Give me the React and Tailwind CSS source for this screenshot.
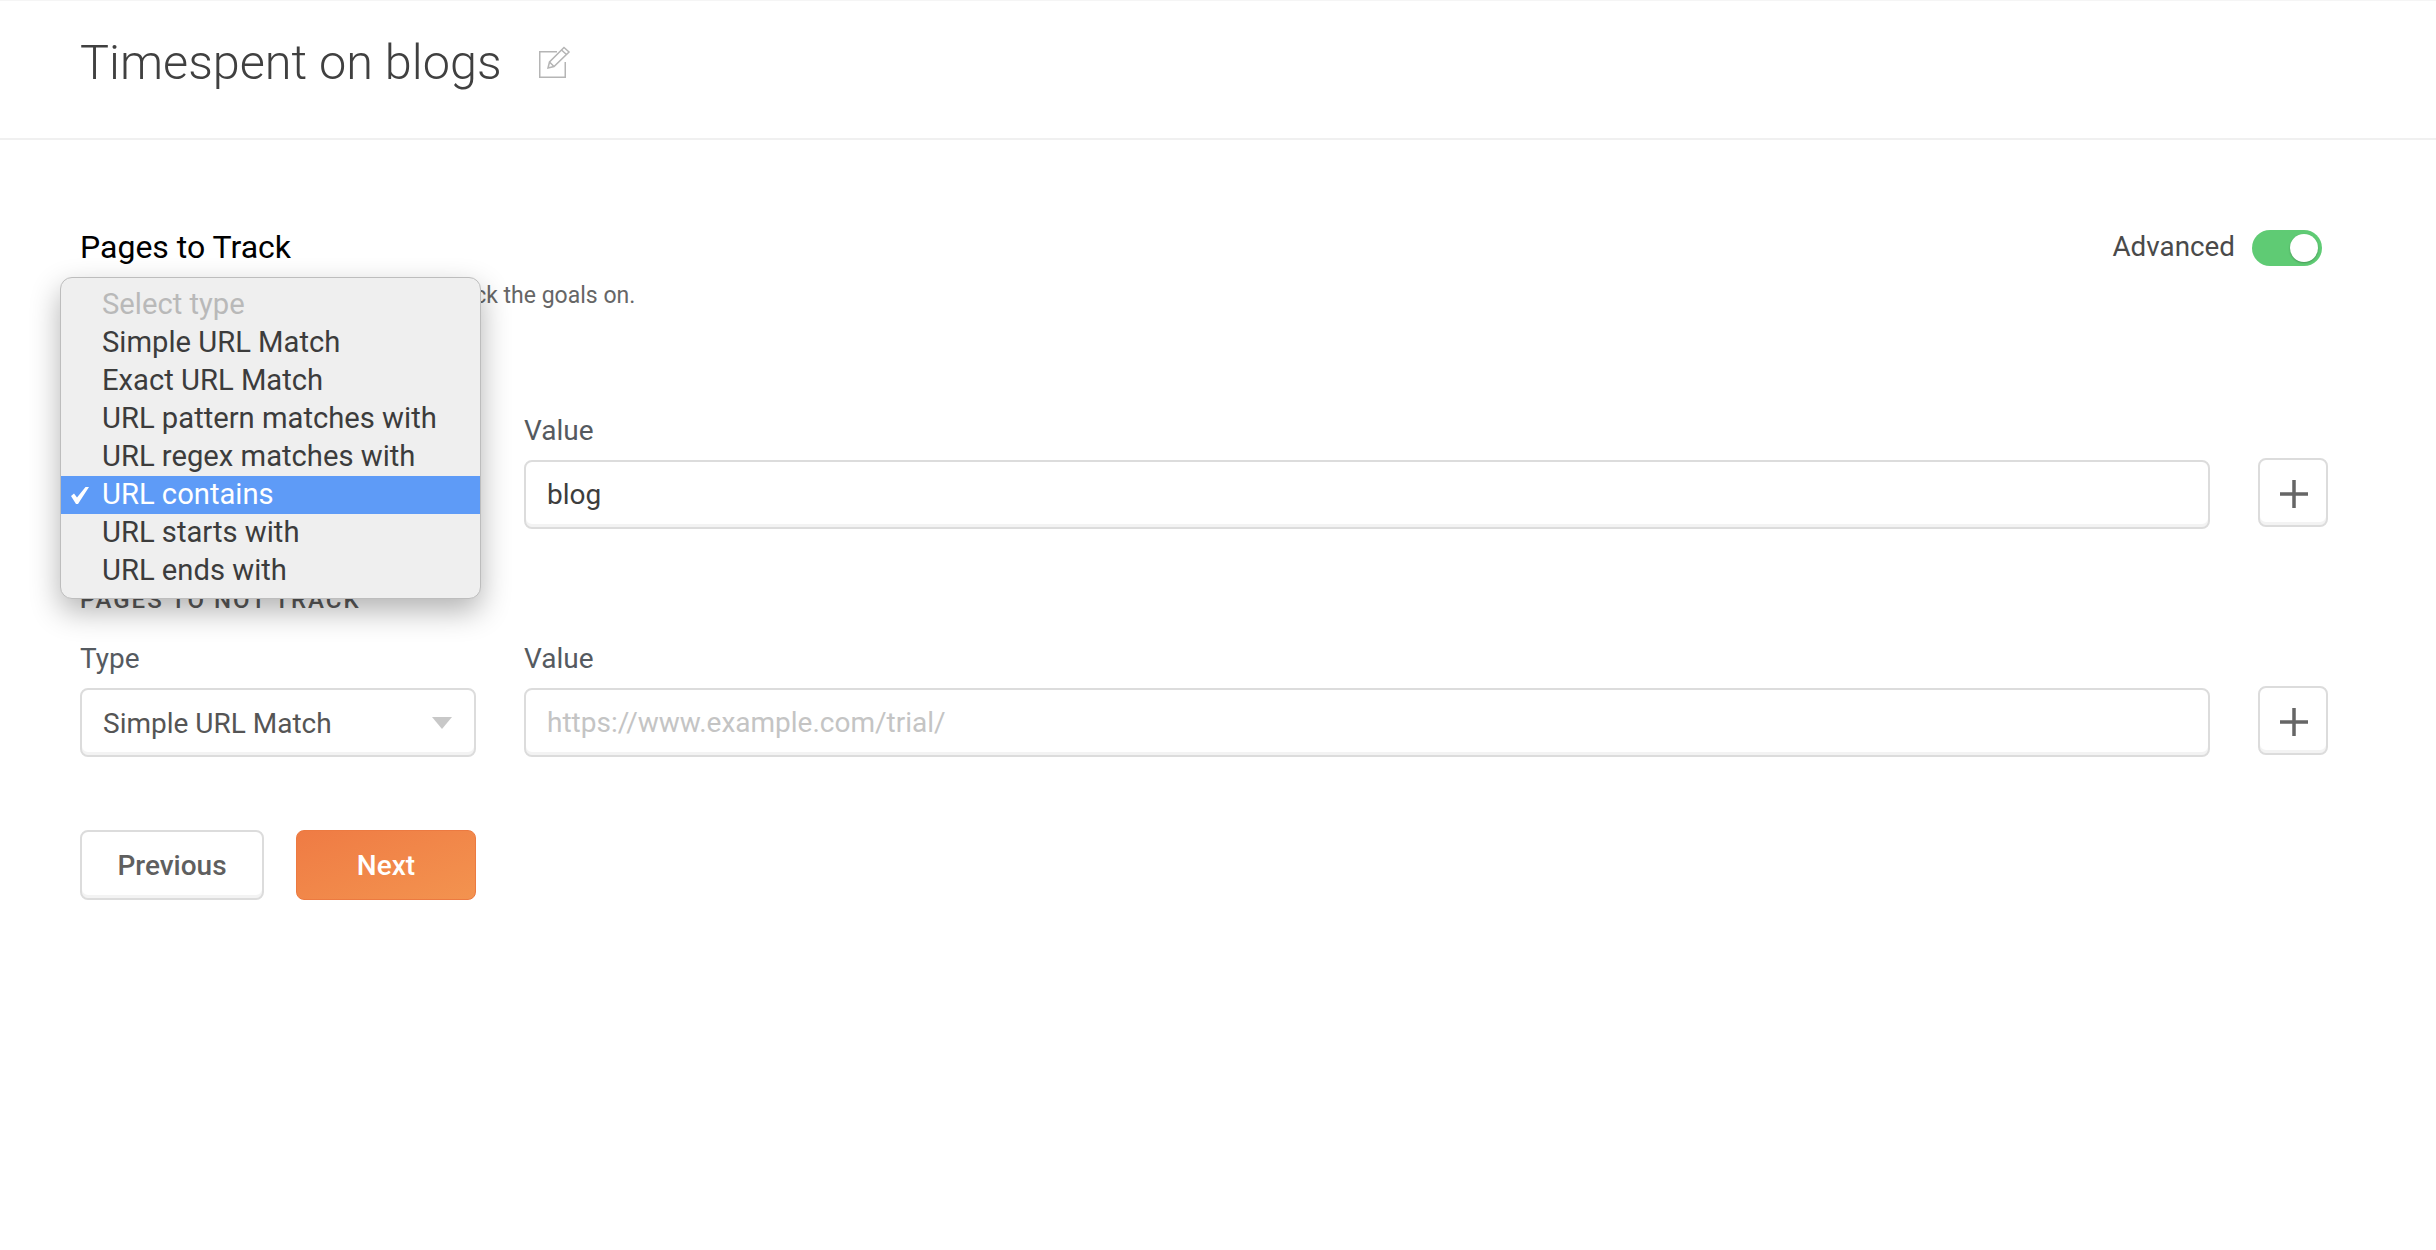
const menuItems = ['Simple URL Match', 'Exact URL Match', 'URL pattern matches with', 'URL regex matches with', 'URL contains', 'URL starts with', 'URL ends with'];

function EditIcon() {
  return (
    <svg width="36" height="36" viewBox="0 0 36 36" fill="none" stroke="#b5b5b5" strokeWidth="1.5" className="ml-[34px]">
      <path d="M21 7.75H3.75v25.5h25.5V18" />
      <path d="M12 24l1.5-6L28 3.5l5 4.5L18 22.5z" />
      <path d="M13.5 18l4.5 4.5M25.5 6l5 4.5" />
    </svg>
  );
}

function PlusButton() {
  return (
    <button className="w-[70px] h-[69px] mb-[2px] shrink-0 flex items-center justify-center rounded-lg border-2 border-[#dcdcdc] bg-white shadow-[inset_0_-3px_0_#f3f3f3]">
      <svg width="28" height="28" viewBox="0 0 28 28" stroke="#666666" strokeWidth="3.5" className="ml-[1px] mt-[2px]">
        <path d="M14 0v28M0 14h28" />
      </svg>
    </button>
  );
}

function FieldRow({ selected, value, placeholder }) {
  return (
    <div className="flex gap-[48px] items-end">
      <div className="w-[396px] shrink-0">
        <div className="text-[28px] leading-[36px] text-[#555a60] mb-[11px]">Type</div>
        <div className="h-[69px] flex items-center justify-between pl-[21px] pr-[22px] rounded-lg border-2 border-[#dcdcdc] bg-white shadow-[inset_0_-3px_0_#f3f3f3] text-[28px] text-[#555555]">
          <span className="pt-[2px]">{selected}</span>
          <span className="w-0 h-0 border-x-[10px] border-x-transparent border-t-[12px] border-t-[#c8c8c8]" />
        </div>
      </div>
      <div className="flex-1">
        <div className="text-[28px] leading-[36px] text-[#555a60] mb-[11px]">Value</div>
        <div className="h-[69px] flex items-center px-[21px] rounded-lg border-2 border-[#dcdcdc] bg-white shadow-[inset_0_-3px_0_#f3f3f3] text-[28px]">
          {value ? <span className="text-[#3d3d3d]">{value}</span> : <span className="text-[#c4c4c4]">{placeholder}</span>}
        </div>
      </div>
      <PlusButton />
    </div>
  );
}

export default function App() {
  return (
    <div className="relative min-h-[1250px] bg-white font-['Roboto',sans-serif]">
      <header className="h-[140px] pl-[80px] pb-[16px] flex items-center border-t border-t-[#f5f5f5] border-b-2 border-b-[#f0f0f0]">
        <h1 className="mt-[4px] text-[48.6px] font-light text-[#404040]">Timespent on blogs</h1>
        <EditIcon />
      </header>

      <main className="pl-[80px] pr-[108px] pt-[84px]">
        <div className="flex justify-between items-center">
          <h2 className="text-[32px] leading-[46px] text-black">Pages to Track</h2>
          <div className="flex items-center gap-[17px] mr-[6px]">
            <span className="text-[27.8px] text-[#4a4a4a]">Advanced</span>
            <span className="w-[70px] h-[36px] mt-[1px] flex items-center justify-end pr-[4px] rounded-full bg-[#5fcb74]">
              <span className="w-[28px] h-[28px] rounded-full bg-white shadow-[0_1px_2px_rgba(0,0,0,0.25)]" />
            </span>
          </div>
        </div>
        <p className="mt-[8px] text-[23px] leading-[36px] text-[#666666]">Select the pages where you want to track the goals on.</p>

        <div className="mt-[43px] text-[24px] leading-[30px] font-medium tracking-[2px] text-[#5a5a5a]">PAGES TO TRACK</div>
        <div className="mt-[26px]">
          <FieldRow selected="URL contains" value="blog" />
        </div>

        <div className="mt-[56px] text-[24px] leading-[30px] font-medium tracking-[2px] text-[#5a5a5a]">PAGES TO NOT TRACK</div>
        <div className="mt-[26px]">
          <FieldRow selected="Simple URL Match" placeholder="https://www.example.com/trial/" />
        </div>

        <div className="mt-[73px] flex gap-[32px]">
          <button className="w-[184px] h-[70px] pt-[2px] rounded-lg border-2 border-[#dcdcdc] bg-white shadow-[inset_0_-3px_0_#f3f3f3] text-[28px] font-medium text-[#5f5f5f]">Previous</button>
          <button className="w-[180px] h-[70px] pt-[2px] rounded-lg border border-[#ec7a41] bg-gradient-to-br from-[#ef7b44] to-[#f3934f] text-[28px] font-medium text-white">Next</button>
        </div>
      </main>

      <ul className="absolute left-[60px] top-[277px] w-[421px] h-[322px] pt-[8px] rounded-xl border border-[#bdbdbd] bg-[#efefef] text-[29.2px] leading-[38px] text-[#3c3c3c] shadow-[0_12px_30px_rgba(0,0,0,0.3)]">
        <li className="pl-[41px] -mt-[1px] pb-[1px] text-[#b9b9b9]">Select type</li>
        {menuItems.map((item) => (
          <li key={item} className={item === 'URL contains' ? 'relative pl-[41px] h-[38px] bg-[#5e9bf7] text-white' : 'pl-[41px] h-[38px]'}>
            {item === 'URL contains' && (
              <svg width="18" height="17" viewBox="0 0 18 17" className="absolute left-[10px] top-[11px]" fill="white">
                <path d="M0 9l3-2.5 3 4L14.5 0 18 0 7 17H5z" />
              </svg>
            )}
            <span className="relative -top-[1px]">{item}</span>
          </li>
        ))}
      </ul>
    </div>
  );
}
